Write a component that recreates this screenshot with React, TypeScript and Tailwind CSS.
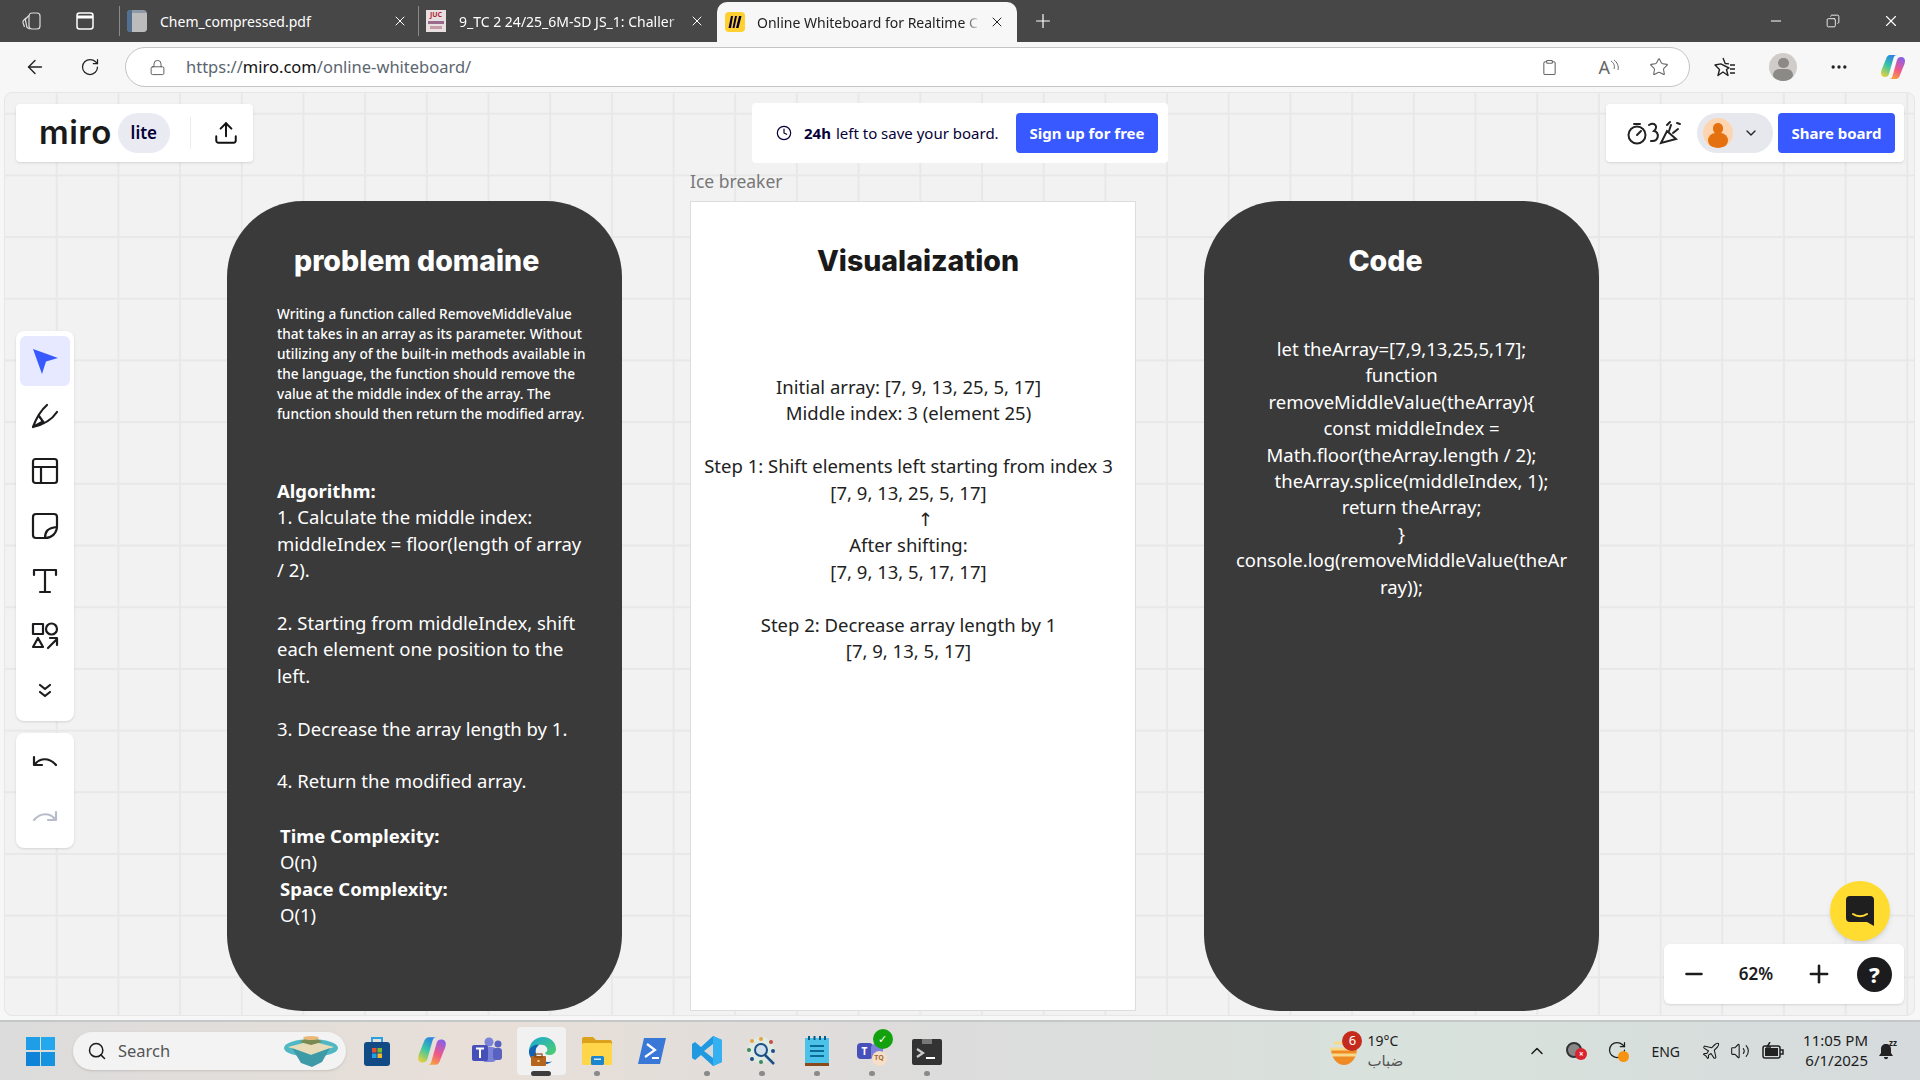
import React from "react";
import { ArrowLeft, RotateCw, Lock, Clipboard, Star, Ellipsis, Minus, Plus, X, Copy, ChevronDown, ChevronUp, Upload, Clock, Search, Volume2, Plane } from "lucide-react";

const algorithmLines = [
    "1. Calculate the middle index:",
    "middleIndex = floor(length of array",
    "/ 2).",
    "\u00a0",
    "2. Starting from middleIndex, shift",
    "each element one position to the",
    "left.",
    "\u00a0",
    "3. Decrease the array length by 1.",
    "\u00a0",
    "4. Return the modified array.",
];

const CopilotIcon = ({ size = 26, id = "cp" }: { size?: number; id?: string }) => (
    <svg width={size} height={size} viewBox="0 0 26 26">
        <defs>
            <linearGradient id={`${id}a`} x1="0.7" y1="0" x2="0.2" y2="1">
                <stop offset="0" stopColor="#2a7fe8" />
                <stop offset="0.5" stopColor="#39c6a5" />
                <stop offset="1" stopColor="#e8d03c" />
            </linearGradient>
            <linearGradient id={`${id}b`} x1="0.7" y1="0" x2="0.3" y2="1">
                <stop offset="0" stopColor="#8a5fe8" />
                <stop offset="0.55" stopColor="#f0578a" />
                <stop offset="1" stopColor="#f7a13c" />
            </linearGradient>
        </defs>
        <path d="M10 1h7c-2 0-3 1-3.500 3L9 20c-.5 2-2 3-4 3-3 0-4-2-4-4 0-3 2-6 3-9l2-5c.5-2 2-4 4-4z" fill={`url(#${id}a)`} />
        <path d="M16 25H9c2 0 3-1 3.500-3L17 6c.5-2 2-3 4-3 3 0 4 2 4 4 0 3-2 6-3 9l-2 5c-.5 2-2 4-4 4z" fill={`url(#${id}b)`} />
    </svg>
);

const EdgeIcon = () => (
    <svg width="30" height="30" viewBox="0 0 30 30">
        <defs>
            <linearGradient id="edg" x1="0" y1="0" x2="1" y2="1">
                <stop offset="0" stopColor="#1aa7d8" />
                <stop offset="1" stopColor="#4fd06a" />
            </linearGradient>
        </defs>
        <path d="M2 14C3 6 9 1 16 1c8 0 13 6 13 12 0 4-3 6-7 6-2 0-4-1-4-2 2-1 3-3 2-5-1-3-5-4-9-3-4 1-7 3-9 5z" fill="url(#edg)" />
        <path d="M2 14c2-4 7-6 10-5-3 2-4 5-3 9 1 5 6 8 12 8 2 0 4-.5 5-1.500-3 3-7 4-11 4C8 28 1 22 2 14z" fill="#0f62b4" />
        <rect x="4" y="20" width="15" height="10" rx="1" fill="#b5651d" />
        <rect x="8" y="18" width="7" height="3" fill="none" stroke="#8a4a12" strokeWidth="1.200" />
        <rect x="10.500" y="24" width="2" height="2" fill="#f5d58a" />
    </svg>
);

const TaskIcon = ({ children, dot, wide }: { children: React.ReactNode; dot?: boolean; wide?: boolean }) => (
    <div className="relative flex h-[48px] w-[55px] shrink-0 items-center justify-center">
        {wide && <div className="absolute inset-y-0 left-[3px] w-[49px] rounded bg-[#f1f1f1]" />}
        <div className="relative">{children}</div>
        {dot && <div className="absolute -bottom-[1px] left-[25px] h-[5px] w-[6px] rounded-full bg-[#8a8a8a]" />}
        {wide && <div className="absolute -bottom-[1px] left-[17px] h-[5px] w-[20px] rounded-full bg-[#3d3d3d]" />}
    </div>
);

const ToolBtn = ({ children, active }: { children: React.ReactNode; active?: boolean }) => (
    <div className="flex h-[55px] w-[50px] items-center">
        <div className={`flex h-[50px] w-[50px] items-center justify-center rounded-md ${active ? "bg-[#e6e9ff]" : ""}`}>{children}</div>
    </div>
);

const TabBar = () => (
    <div className="flex h-[42px] shrink-0 items-center bg-[#474747] text-[14px] text-white">
        <div className="flex w-[119px] items-center pl-[21px]">
            <svg width="22" height="22" viewBox="0 0 22 22" fill="none" stroke="#dcdcdc" strokeWidth="1.200">
                <rect x="8" y="3" width="11" height="16" rx="3" />
                <path d="M8 5.500L5 8.500a2 2 0 00-.5 2l1.500 7 3 1.500" />
                <path d="M5 8L2.500 10.500a2 2 0 00-.5 2l1.500 4.500" />
            </svg>
            <svg className="ml-[32px]" width="20" height="22" viewBox="0 0 20 22" fill="none" stroke="#fff" strokeWidth="1.500">
                <rect x="2" y="3" width="16" height="16" rx="2.500" />
                <path d="M2 7h16" strokeWidth="3" />
            </svg>
        </div>
        <div className="h-[30px] w-px bg-[#8a8a8a]" />
        <div className="flex w-[298px] items-center pl-[7px]">
            <div className="flex h-[22px] w-[20px] overflow-hidden rounded-sm bg-[#8f9aa6]">
                <div className="h-full w-[5px] bg-[#52708f]" />
                <div className="mt-[3px] h-full flex-1 bg-[#bcbcbc]" />
            </div>
            <span className="ml-[13px] w-[232px] truncate">Chem_compressed.pdf</span>
            <X size={16} strokeWidth={1.500} />
        </div>
        <div className="h-[30px] w-px bg-[#8a8a8a]" />
        <div className="flex w-[298px] items-center pl-[7px]">
            <div className="flex h-[22px] w-[20px] flex-col items-center overflow-hidden bg-[#e8dfe0] text-[7px] font-bold leading-[9px] text-[#b0243a]">
                JUC
                <div className="mt-[2px] h-[3px] w-[16px] bg-[#9a6a8a]" />
                <div className="mt-[2px] h-[3px] w-[12px] bg-[#c79aa5]" />
            </div>
            <span className="ml-[13px] w-[226px] whitespace-nowrap [mask-image:linear-gradient(90deg,#000_92%,transparent)]">
                9_TC 2 24/25_6M-SD JS_1: Challer
            </span>
            <X size={16} strokeWidth={1.500} className="ml-[4px]" />
        </div>
        <div className="mt-[2px] flex h-[40px] w-[300px] items-center self-start rounded-t-[10px] bg-[#f7f7f7] pl-[8px] text-[#222]">
            <div className="flex h-[20px] w-[20px] items-center justify-center rounded-sm bg-[#ffd02f]">
                <svg width="14" height="14" viewBox="0 0 14 14" fill="#050038">
                    <path d="M3 1h2L3 13H0.500zM7 1h2L6.500 13H4.500zM11 1h2.500L10.500 13H8z" />
                </svg>
            </div>
            <span className="ml-[12px] w-[224px] whitespace-nowrap [mask-image:linear-gradient(90deg,#000_92%,transparent)]">
                Online Whiteboard for Realtime C
            </span>
            <X size={16} strokeWidth={1.500} className="ml-[8px]" />
        </div>
        <Plus size={22} strokeWidth={1.300} className="ml-[15px]" />
        <div className="ml-auto flex items-center pr-[20px]">
            <Minus size={16} strokeWidth={1.500} />
            <Copy size={14} strokeWidth={1.500} className="ml-[42px] -scale-x-100" />
            <X size={18} strokeWidth={1.500} className="ml-[42px]" />
        </div>
    </div>
);

const AddressBar = () => (
    <div className="flex h-[50px] shrink-0 items-center bg-[#f7f7f7] text-[#222]">
        <ArrowLeft size={22} strokeWidth={1.500} className="ml-[24px]" />
        <RotateCw size={20} strokeWidth={1.500} className="ml-[34px]" />
        <div className="ml-[25px] flex h-[40px] w-[1565px] items-center rounded-full border border-[#c4c4c4] bg-white pl-[23px]">
            <Lock size={17} strokeWidth={1.300} className="text-[#555]" />
            <span className="ml-[20px] text-[16.500px] text-[#5c6670]">
                https://<span className="text-[#111]">miro.com</span>/online-whiteboard/
            </span>
            <div className="ml-auto flex items-center pr-[20px] text-[#666]">
                <Clipboard size={17} strokeWidth={1.500} />
                <span className="ml-[40px] text-[18px] leading-none">A</span>
                <svg width="9" height="14" viewBox="0 0 9 14" fill="none" stroke="#666" strokeWidth="1">
                    <path d="M1 1c3 2 4 5 3 8M4 0c3 2 5 6 4 10" />
                </svg>
                <Star size={20} strokeWidth={1.300} className="ml-[30px]" />
            </div>
        </div>
        <div className="ml-[24px] flex items-center">
            <svg width="22" height="22" viewBox="0 0 22 22" fill="none" stroke="#222" strokeWidth="1.400" strokeLinejoin="round">
                <path d="M9 2l2.200 5.500 3.800.4M15 12l-2.500 1.500 1.500 6L9 16l-5 3.500 1.500-6L1 9l5.800-1.100z" />
                <path d="M16 9h5M16 13h5M16 17h5" />
            </svg>
            <div className="ml-[33px] flex h-[28px] w-[28px] flex-col items-center overflow-hidden rounded-full bg-[#cfccca]">
                <div className="mt-[5px] h-[11px] w-[11px] rounded-full bg-[#8c8a87]" />
                <div className="mt-[1px] h-[14px] w-[20px] rounded-full bg-[#8c8a87]" />
            </div>
            <Ellipsis size={20} className="ml-[32px]" />
            <div className="ml-[31px]">
                <CopilotIcon id="cptop" />
            </div>
        </div>
    </div>
);

const TopLeftPanel = () => (
    <div className="absolute left-[11px] top-[11px] flex h-[58px] w-[237px] items-center rounded bg-white shadow-sm">
        <span className="mb-[2px] ml-[23px] font-['Inter',sans-serif] text-[33px] font-semibold leading-none tracking-[0.5px] text-[#1a1a1a]">miro</span>
        <div className="ml-[6px] flex h-[40px] w-[52px] items-center justify-center rounded-full bg-[#e9eaf2] text-[17px] font-semibold text-[#050038]">lite</div>
        <div className="ml-[20px] h-[32px] w-px bg-[#ececec]" />
        <Upload size={26} strokeWidth={1.800} className="ml-[22px] text-[#111]" />
    </div>
);

const SavePanel = () => (
    <div className="absolute left-[747px] top-[10px] flex h-[60px] w-[416px] items-center rounded bg-white text-[15px] text-[#050038]">
        <Clock size={16} strokeWidth={1.800} className="ml-[24px]" />
        <span className="ml-[12px] font-bold">24h</span>
        <span className="ml-[5px]">left to save your board.</span>
        <div className="ml-auto mr-[10px] flex h-[40px] w-[142px] items-center justify-center rounded bg-[#3859ff] font-bold text-white">Sign up for free</div>
    </div>
);

const ShareMark = () => (
    <svg width="56" height="28" viewBox="0 0 56 28" fill="none" stroke="#222" strokeWidth="2" strokeLinecap="round">
        <circle cx="10" cy="16" r="8.500" />
        <path d="M10 16l4-4M7 5h6" />
        <path d="M22 6c5-3 10 1 5 6 6 1 5 11-3 10" />
        <path d="M34 24l6-12 9 8zM42 12l2-6M46 14l5-4M40 6l3-3M50 4l3 1" />
    </svg>
);

const ShareBoardPanel = () => (
    <div className="absolute right-[10px] top-[11px] flex h-[58px] w-[298px] items-center rounded bg-white shadow-sm">
        <div className="ml-[21px]">
            <ShareMark />
        </div>
        <div className="ml-[14px] flex h-[40px] w-[76px] items-center rounded-full bg-[#e6e8ee] pl-[6px]">
            <div className="flex h-[30px] w-[30px] flex-col items-center overflow-hidden rounded-full bg-[#fdd5b1]">
                <div className="mt-[5px] h-[11px] w-[10px] rounded-full bg-[#e5700f]" />
                <div className="-mt-[1px] h-[15px] w-[20px] rounded-full bg-[#e5700f]" />
            </div>
            <ChevronDown size={16} strokeWidth={2} className="ml-[10px] text-[#222]" />
        </div>
        <div className="ml-[5px] flex h-[40px] w-[117px] items-center justify-center rounded bg-[#3859ff] text-[15px] font-bold text-white">Share board</div>
    </div>
);

const Toolbar = () => {
    const stroke = { fill: "none", stroke: "#1c1c1e", strokeWidth: 2.200, strokeLinecap: "round" as const, strokeLinejoin: "round" as const };
    return (
        <div className="absolute left-[11px] top-[238px] flex flex-col gap-[12px]">
            <div className="flex h-[390px] w-[58px] flex-col items-center rounded-lg bg-white pt-[2px] shadow-sm">
                <ToolBtn active>
                    <svg width="28" height="28" viewBox="0 0 28 28">
                        <path d="M2 2l25 9-12 3.500L11 27z" fill="#3859ff" />
                    </svg>
                </ToolBtn>
                <ToolBtn>
                    <svg width="28" height="28" viewBox="0 0 28 28" {...stroke}>
                        <path d="M2 25C5 17 9 9 16 3M2 25C11 23 20 19 26 10M2 25l9-5M8 14l5 7" />
                    </svg>
                </ToolBtn>
                <ToolBtn>
                    <svg width="28" height="28" viewBox="0 0 28 28" {...stroke}>
                        <rect x="2" y="2" width="24" height="24" rx="2.500" />
                        <path d="M2 10h24M10 10v16" />
                    </svg>
                </ToolBtn>
                <ToolBtn>
                    <svg width="28" height="28" viewBox="0 0 28 28" {...stroke}>
                        <path d="M5 2h18a3 3 0 013 3v9c0 7-5 12-12 12H5a3 3 0 01-3-3V5a3 3 0 013-3z" />
                        <path d="M14 26c0-6 2-10 12-11" />
                    </svg>
                </ToolBtn>
                <ToolBtn>
                    <svg width="28" height="28" viewBox="0 0 28 28" {...stroke}>
                        <path d="M3 8V3h22v5M14 3v22M9 25h10" />
                    </svg>
                </ToolBtn>
                <ToolBtn>
                    <svg width="28" height="28" viewBox="0 0 28 28" {...stroke}>
                        <rect x="2" y="2" width="10" height="10" />
                        <circle cx="20.500" cy="7" r="5.500" />
                        <path d="M7 16l5 9H2zM17 26l9-9M19 16h7v7" />
                    </svg>
                </ToolBtn>
                <ToolBtn>
                    <svg width="16" height="16" viewBox="0 0 16 16" {...stroke}>
                        <path d="M3 2l5 4 5-4M3 9l5 4 5-4" />
                    </svg>
                </ToolBtn>
            </div>
            <div className="flex h-[115px] w-[58px] flex-col items-center justify-center rounded-lg bg-white shadow-sm">
                <ToolBtn>
                    <svg width="26" height="20" viewBox="0 0 26 20" {...stroke}>
                        <path d="M2 4v8h8M3 11c5-6 14-7 21 1" />
                    </svg>
                </ToolBtn>
                <ToolBtn>
                    <svg width="26" height="20" viewBox="0 0 26 20" {...stroke} stroke="#b8bccb">
                        <path d="M24 4v8h-8M23 11c-5-6-14-7-21 1" />
                    </svg>
                </ToolBtn>
            </div>
        </div>
    );
};

const ZoomPanel = () => (
    <>
        <div className="absolute bottom-[74px] right-[24px] flex h-[60px] w-[60px] items-center justify-center rounded-full bg-[#ffdc2f] shadow-md">
            <svg width="28" height="30" viewBox="0 0 28 30">
                <path d="M4 0h20a4 4 0 014 4v26l-7-4H4a4 4 0 01-4-4V4a4 4 0 014-4z" fill="#1f1f1f" />
                <path d="M7 18c4 3 10 3 14 0" fill="none" stroke="#ffdc2f" strokeWidth="2" strokeLinecap="round" />
            </svg>
        </div>
        <div className="absolute bottom-[11px] right-[10px] flex h-[60px] w-[240px] items-center rounded-md bg-white shadow-sm">
            <Minus size={26} strokeWidth={2.200} className="ml-[17px] text-[#1c1c1e]" />
            <span className="ml-[27px] w-[44px] text-center text-[17px] font-semibold text-[#1c1c1e]">62%</span>
            <Plus size={28} strokeWidth={2.200} className="ml-[27px] text-[#1c1c1e]" />
            <div className="ml-[24px] flex h-[35px] w-[35px] items-center justify-center rounded-full bg-[#1c1c1e] text-[22px] font-extrabold text-white">?</div>
        </div>
    </>
);

const Heading = ({ children, className }: { children: React.ReactNode; className: string }) => (
    <h2 className={`font-['Inter',sans-serif] text-[28.500px] font-extrabold leading-[36px] ${className}`}>{children}</h2>
);

const ProblemCard = () => (
    <div className="absolute left-[222px] top-[108px] h-[810px] w-[395px] rounded-[76px] bg-[#3a3a3a] pt-[42px] text-white">
        <Heading className="pl-[67px]">problem domaine</Heading>
        <p className="mt-[25px] pl-[50px] text-[13.600px] font-medium leading-[20px]">
            Writing a function called RemoveMiddleValue
            <br />
            that takes in an array as its parameter. Without
            <br />
            utilizing any of the built-in methods available in
            <br />
            the language, the function should remove the
            <br />
            value at the middle index of the array. The
            <br />
            function should then return the modified array.
        </p>
        <div className="mt-[54px] pl-[50px] text-[18.500px] leading-[26.400px]">
            <div className="font-bold">Algorithm:</div>
            {algorithmLines.map((line, i) => (
                <div key={i}>{line}</div>
            ))}
        </div>
        <div className="mt-[28px] pl-[53px] text-[18.500px] leading-[26.400px]">
            <div className="font-bold">Time Complexity:</div>
            <div>O(n)</div>
            <div className="font-bold">Space Complexity:</div>
            <div>O(1)</div>
        </div>
    </div>
);

const VisualCard = () => (
    <>
        <div className="absolute left-[685px] top-[75px] text-[17.500px] leading-[26px] text-[#777]">Ice breaker</div>
        <div className="absolute left-[685px] top-[108px] h-[810px] w-[446px] border border-[#dddddd] bg-white pt-[41px] text-[#222]">
            <Heading className="pl-[10px] text-center text-[#1a1a1a]">Visualaization</Heading>
            <div className="mt-[95px] pr-[9px] text-center text-[18.500px] leading-[26.400px]">
                <div>Initial array: [7, 9, 13, 25, 5, 17]</div>
                <div>Middle index: 3 (element 25)</div>
                <div>&nbsp;</div>
                <div>Step 1: Shift elements left starting from index 3</div>
                <div>[7, 9, 13, 25, 5, 17]</div>
                <div className="pl-[34px]">↑</div>
                <div>After shifting:</div>
                <div>[7, 9, 13, 5, 17, 17]</div>
                <div>&nbsp;</div>
                <div>Step 2: Decrease array length by 1</div>
                <div>[7, 9, 13, 5, 17]</div>
            </div>
        </div>
    </>
);

const CodeCard = () => (
    <div className="absolute left-[1199px] top-[108px] h-[810px] w-[395px] rounded-[76px] bg-[#3a3a3a] pt-[42px] text-center text-white">
        <Heading className="pr-[32px]">Code</Heading>
        <div className="mt-[57px] text-[18.500px] leading-[26.400px]">
            <div>let theArray=[7,9,13,25,5,17];</div>
            <div>function</div>
            <div>removeMiddleValue(theArray){"{"}</div>
            <div className="pl-[20px]">const middleIndex =</div>
            <div>Math.floor(theArray.length / 2);</div>
            <div className="pl-[20px]">theArray.splice(middleIndex, 1);</div>
            <div className="pl-[20px]">return theArray;</div>
            <div>{"}"}</div>
            <div>console.log(removeMiddleValue(theAr</div>
            <div>ray));</div>
        </div>
    </div>
);

const Taskbar = () => (
    <div className="flex h-[60px] shrink-0 items-center border-t-2 border-[#c4c8c8] bg-[linear-gradient(90deg,#dcdcdc_0%,#e8dfd8_25%,#dcdcdc_50%,#d8e2dc_75%,#d6dadc_100%)] text-[#1c1c1c]">
        <div className="ml-[26px] grid h-[29px] w-[29px] grid-cols-2 gap-[1.500px]">
            <div className="bg-[#1f9ee8]" />
            <div className="bg-[#23a8ee]" />
            <div className="bg-[#0f83d8]" />
            <div className="bg-[#1592e0]" />
        </div>
        <div className="relative ml-[18px] flex h-[38px] w-[273px] items-center rounded-full bg-[#f3f3f3] pl-[14px] shadow-sm">
            <Search size={20} strokeWidth={1.800} />
            <span className="ml-[11px] text-[16.500px] text-[#555]">Search</span>
            <svg className="absolute right-[6px] top-[3px]" width="58" height="34" viewBox="0 0 58 34">
                <ellipse cx="29" cy="13" rx="27" ry="9" fill="#4fb8c4" />
                <path d="M6 12l23-6 23 6-23 8z" fill="#e8dcb8" />
                <path d="M10 13l19 7 19-7-8 14-10 5-11-4z" fill="#3f9aa8" />
                <path d="M18 7c6-5 16-5 22 0l-11 3z" fill="#7a8a50" />
                <ellipse cx="29" cy="3" rx="8" ry="2" fill="#e8b878" />
            </svg>
        </div>
        <div className="ml-[3px] flex items-center">
            <TaskIcon>
                <svg width="26" height="30" viewBox="0 0 26 30">
                    <path d="M8 6V2h10v4" fill="none" stroke="#2aa0e0" strokeWidth="2" />
                    <rect x="0" y="6" width="26" height="24" rx="3" fill="#124a85" />
                    <rect x="8" y="12" width="4.500" height="4.500" fill="#e8502f" />
                    <rect x="13.500" y="12" width="4.500" height="4.500" fill="#7cb82f" />
                    <rect x="8" y="17.500" width="4.500" height="4.500" fill="#1ea2e8" />
                    <rect x="13.500" y="17.500" width="4.500" height="4.500" fill="#f7b52c" />
                </svg>
            </TaskIcon>
            <TaskIcon>
                <CopilotIcon size={30} id="cpbar" />
            </TaskIcon>
            <TaskIcon>
                <svg width="30" height="28" viewBox="0 0 30 28">
                    <circle cx="17" cy="5" r="4.500" fill="#7b83d8" />
                    <circle cx="26" cy="7" r="3.500" fill="#5a62c0" />
                    <rect x="10" y="10" width="14" height="15" rx="4" fill="#7b83d8" />
                    <rect x="21" y="11" width="9" height="12" rx="3" fill="#5a62c0" />
                    <rect x="0" y="8" width="16" height="16" rx="2" fill="#4750b8" />
                    <path d="M4 11.500h8M8 11.500V21" stroke="#fff" strokeWidth="2" />
                </svg>
            </TaskIcon>
            <TaskIcon wide>
                <EdgeIcon />
            </TaskIcon>
            <TaskIcon dot>
                <svg width="30" height="28" viewBox="0 0 30 28">
                    <path d="M0 2a2 2 0 012-2h9l3 3h14a2 2 0 012 2v3H0z" fill="#dca11c" />
                    <rect x="0" y="6" width="30" height="22" rx="1.500" fill="#ffd54a" />
                    <rect x="9" y="19" width="13" height="9" rx="1.500" fill="#1b85d0" />
                    <rect x="12" y="21.500" width="7" height="1.500" fill="#cfeaff" />
                </svg>
            </TaskIcon>
            <TaskIcon>
                <svg width="28" height="26" viewBox="0 0 28 26">
                    <path d="M6 0h22l-6 26H0z" fill="#3a78d8" />
                    <path d="M9 6l8 6-10 7M14 20h7" fill="none" stroke="#fff" strokeWidth="2.200" />
                </svg>
            </TaskIcon>
            <TaskIcon dot>
                <svg width="30" height="30" viewBox="0 0 30 30">
                    <path d="M21 0l9 4v22l-9 4-12-11-6 5-3-2V8l3-2 6 5z" fill="#1f9ae0" />
                    <path d="M21 8v14l-9-7z" fill="#d8d8d8" />
                    <path d="M21 0l9 4v22l-9 4z" fill="#35b0f0" />
                </svg>
            </TaskIcon>
            <TaskIcon dot>
                <svg width="30" height="30" viewBox="0 0 30 30">
                    <circle cx="14" cy="14" r="13" fill="#dfeae2" />
                    <circle cx="14" cy="14" r="6" fill="#cfe0ea" stroke="#1c4f86" strokeWidth="2" />
                    <path d="M18 19l9 9" stroke="#1c4f86" strokeWidth="2.500" />
                    <circle cx="14" cy="3" r="2" fill="#e8a33c" />
                    <circle cx="24" cy="6" r="2" fill="#c0503c" />
                    <circle cx="26" cy="15" r="2" fill="#1c4f86" />
                    <circle cx="5" cy="5" r="2" fill="#e8a33c" />
                    <circle cx="2" cy="14" r="2" fill="#3c8a5c" />
                    <circle cx="5" cy="23" r="2" fill="#1c4f86" />
                    <circle cx="14" cy="26" r="2" fill="#3c8a5c" />
                </svg>
            </TaskIcon>
            <TaskIcon dot>
                <svg width="24" height="30" viewBox="0 0 24 30">
                    <rect x="0" y="2" width="24" height="27" fill="#4cc2e8" />
                    <rect x="0" y="27" width="24" height="3" fill="#8a4a1c" />
                    <path d="M5 10h14M5 15h14M5 20h14" stroke="#0b6a98" strokeWidth="2.200" />
                    <path d="M4 0v4M9.500 0v4M15 0v4M20 0v4" stroke="#0b5a88" strokeWidth="2" />
                </svg>
            </TaskIcon>
            <TaskIcon dot>
                <div className="relative h-[30px] w-[30px]">
                    <div className="absolute left-0 top-[7px] flex h-[16px] w-[16px] items-center justify-center rounded-sm bg-[#4750b8] text-[10px] font-bold text-white">T</div>
                    <div className="absolute left-[14px] top-[8px] h-[16px] w-[12px] rounded bg-[#7b83d8]" />
                    <div className="absolute left-[16px] top-[-7px] flex h-[20px] w-[20px] items-center justify-center rounded-full bg-[#13a10e] text-[11px] font-bold text-white">✓</div>
                    <div className="absolute left-[15px] top-[15px] flex h-[15px] w-[15px] items-center justify-center rounded-full bg-[#f7dfc7] text-[7px] font-bold text-[#a0703c]">TQ</div>
                </div>
            </TaskIcon>
            <TaskIcon dot>
                <svg width="30" height="28" viewBox="0 0 30 28">
                    <rect x="0" y="2" width="30" height="26" rx="2" fill="#333" />
                    <rect x="10" y="2" width="10" height="5" fill="#777" />
                    <path d="M5 12l6 4-6 4" fill="none" stroke="#ccc" strokeWidth="2.200" />
                    <path d="M14 21h9" stroke="#fff" strokeWidth="2" />
                </svg>
            </TaskIcon>
        </div>
        <div className="ml-auto flex items-center">
            <div className="relative h-[34px] w-[30px]">
                <svg className="absolute left-0 top-[6px]" width="30" height="26" viewBox="0 0 30 26">
                    <path d="M2 8h26c0 10-6 17-13 17S2 18 2 8z" fill="#f08a24" />
                    <path d="M5 3h10M1 9h20M3 15h24" stroke="#f7d98a" strokeWidth="3" />
                </svg>
                <div className="absolute -top-[3px] left-[13px] flex h-[20px] w-[20px] items-center justify-center rounded-full bg-[#c42b1c] text-[13px] text-white">6</div>
            </div>
            <div className="ml-[8px] flex w-[60px] flex-col text-[14px] leading-[20px]">
                <span>19°C</span>
                <span className="font-['DejaVu_Sans',sans-serif] text-[15px] text-[#555]">ضباب</span>
            </div>
            <ChevronUp size={20} strokeWidth={1.800} className="ml-[100px]" />
            <div className="relative ml-[19px] h-[18px] w-[20px]">
                <div className="absolute left-0 top-0 h-[16px] w-[16px] rounded-full border-2 border-[#333] bg-[#888]" />
                <div className="absolute left-[9px] top-[6px] flex h-[12px] w-[12px] items-center justify-center rounded-full bg-[#d9232e] text-[8px] font-bold leading-none text-white">×</div>
            </div>
            <div className="relative ml-[21px] h-[22px] w-[22px]">
                <RotateCw size={20} strokeWidth={1.500} />
                <div className="absolute bottom-0 right-0 h-[11px] w-[11px] rounded-full bg-[#f7930e]" />
            </div>
            <span className="ml-[22px] text-[14px]">ENG</span>
            <Plane size={20} strokeWidth={1.300} className="ml-[21px]" />
            <Volume2 size={20} strokeWidth={1.300} className="ml-[9px]" />
            <svg className="ml-[12px]" width="22" height="18" viewBox="0 0 22 18" fill="none" stroke="#222" strokeWidth="1.500">
                <rect x="1" y="4" width="17" height="12" rx="2" />
                <rect x="3" y="6" width="13" height="8" fill="#222" stroke="none" />
                <path d="M18 8h3v4h-3M8 0L5 5h4" />
            </svg>
            <div className="-mt-[2px] ml-[14px] flex w-[70px] flex-col items-end text-[15px] leading-[20px]">
                <span>11:05 PM</span>
                <span>6/1/2025</span>
            </div>
            <div className="relative ml-[10px] mr-[26px]">
                <svg width="16" height="20" viewBox="0 0 16 20" fill="#222">
                    <path d="M8 3c-3 0-5 2-5 5v4l-2 3h14l-2-3V8c0-3-2-5-5-5zM6 16h4c0 3-4 3-4 0z" />
                </svg>
                <span className="absolute -right-[3px] -top-[4px] text-[8px] font-bold">zz</span>
            </div>
        </div>
    </div>
);

export default function App() {
    return (
        <div className="flex h-screen w-[1920px] flex-col overflow-hidden bg-[#f7f7f7] font-['Noto_Sans','DejaVu_Sans',sans-serif]">
            <TabBar />
            <AddressBar />
            <div className="relative mb-[4px] ml-[4px] mr-[5px] flex-1 overflow-hidden rounded-lg border border-[#e6e6e6] bg-[#f2f2f2] bg-[linear-gradient(#e8e8e8_2px,transparent_2px),linear-gradient(90deg,#e8e8e8_2px,transparent_2px)] bg-size-[61.7px_61.7px] bg-position-[-11px_-42px]">
                <ProblemCard />
                <VisualCard />
                <CodeCard />
                <TopLeftPanel />
                <SavePanel />
                <ShareBoardPanel />
                <Toolbar />
                <ZoomPanel />
            </div>
            <Taskbar />
        </div>
    );
}
